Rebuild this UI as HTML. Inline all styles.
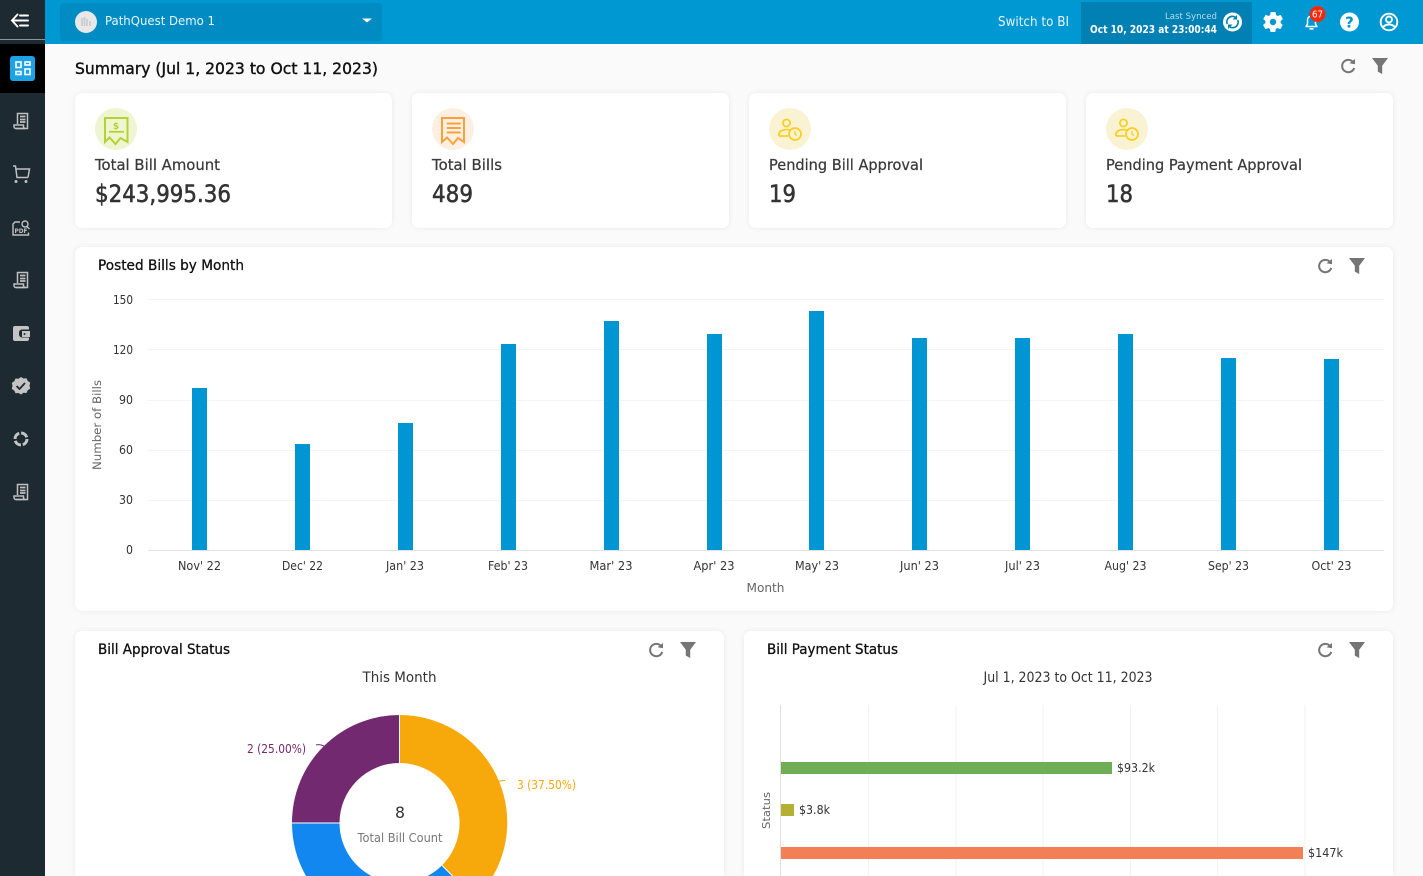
<!DOCTYPE html>
<html><head><meta charset="utf-8"><title>Summary</title>
<style>
html,body{margin:0;padding:0;width:1423px;height:876px;overflow:hidden;background:#fafafa}
#w{position:relative;width:1423px;height:876px;overflow:hidden;background:#fafafa}
.c{position:absolute;background:#fff;border-radius:7px;box-shadow:0 0 6px rgba(0,0,0,.07)}
svg{position:absolute;left:0;top:0}
text{font-family:"DejaVu Sans","Liberation Sans",sans-serif}
</style></head><body>
<div id="w">
<div class="c" style="left:75px;top:93px;width:317px;height:135px"></div>
<div class="c" style="left:412px;top:93px;width:317px;height:135px"></div>
<div class="c" style="left:749px;top:93px;width:317px;height:135px"></div>
<div class="c" style="left:1086px;top:93px;width:307px;height:135px"></div>
<div class="c" style="left:75px;top:247px;width:1318px;height:364px"></div>
<div class="c" style="left:75px;top:631px;width:649px;height:245px;border-radius:7px 7px 0 0"></div>
<div class="c" style="left:744px;top:631px;width:649px;height:245px;border-radius:7px 7px 0 0"></div>
<svg width="1423" height="876" viewBox="0 0 1423 876" xmlns="http://www.w3.org/2000/svg">
<defs>
<g id="rf" fill="none" stroke="#757575" stroke-width="2"><path d="M13.2 4.2A6.2 6.2 0 1 0 14.2 10"/><path d="M9.5 5.2L15 6.2V1z" fill="#757575" stroke="none"/></g>
<path id="fl" fill="#757575" d="M0 0H16L10.2 7.8V16L5.8 13.6V7.8z"/>
<g id="rc" fill="none" stroke="#c0c0c0"><path d="M4.500 12V1.500H14.500V16.500H3" stroke-width="1.500"/><path d="M1 13H10.500V14.500a2 2 0 0 0 2 2H3a2 2 0 0 1-2-2z" stroke-width="1.500"/><path d="M7 4.500H12.500M7 7.500H12.500M7 10H12.500" stroke-width="1.700"/></g>
<g id="us"><circle cx="21" cy="21" r="21" fill="#f9f3d4"/><g fill="none" stroke="#fbcf22" stroke-width="1.800"><circle cx="17.500" cy="15" r="3.600"/><path d="M10 28v-1.500c0-3.500 4-5 7.500-5 1.500 0 2.500.2 3.500.7M10 28h9"/><circle cx="26" cy="26" r="6"/><path d="M26 23v3.200l2 1.300" stroke-width="1.300"/></g></g>
</defs>

<!-- top bar -->
<rect x="45" y="0" width="1378" height="44" fill="#0098d2"/>
<rect x="60" y="3" width="322" height="38" rx="4" fill="#008cc2"/>
<circle cx="86" cy="22" r="11" fill="#e8e8e8"/>
<path d="M82 26v-8M84.500 26v-9M87 26v-7M90 26v-5" stroke="#c9c9c9" stroke-width="1.600" fill="none"/>
<text x="105" y="25" font-size="12" fill="#e8f6fc" textLength="110" lengthAdjust="spacingAndGlyphs">PathQuest Demo 1</text>
<path d="M362 18.500h10l-5 4z" fill="#fff"/>
<text x="998" y="26" font-size="13" fill="#e8f6fc" textLength="71" lengthAdjust="spacingAndGlyphs">Switch to BI</text>
<rect x="1081" y="2" width="171" height="42" fill="#0080b3"/>
<text x="1165" y="19" font-size="9" fill="#b5dcec" textLength="52" lengthAdjust="spacingAndGlyphs">Last Synced</text>
<text x="1090" y="33" font-size="11" font-weight="bold" fill="#fff" textLength="127" lengthAdjust="spacingAndGlyphs">Oct 10, 2023 at 23:00:44</text>
<circle cx="1232.500" cy="22" r="9.500" fill="#fff"/>
<g fill="none" stroke="#0080b3" stroke-width="1.700"><path d="M1227.300 24a5.500 5.500 0 0 1 7.700-7"/><path d="M1237.700 20a5.500 5.500 0 0 1-7.700 7"/></g>
<path d="M1237 15v4.500h-4.500zM1228 29v-4.500h4.500z" fill="#0080b3"/>
<!-- gear -->
<g transform="translate(1273,22)"><path fill="#fff" d="M7.600 1a7.500 7.500 0 0 0 0-2L9.700-2.700a.5.5 0 0 0 .1-.6l-2-3.500a.5.5 0 0 0-.6-.2l-2.500 1a7.500 7.500 0 0 0-1.700-1l-.4-2.600a.5.5 0 0 0-.5-.4h-4a.5.5 0 0 0-.5.4l-.4 2.600a7.500 7.500 0 0 0-1.700 1l-2.500-1a.5.500 0 0 0-.6.2l-2 3.500a.5.500 0 0 0 .1.600L-7.600-1a7.500 7.500 0 0 0 0 2l-2.100 1.700a.5.500 0 0 0-.1.600l2 3.500a.5.500 0 0 0 .6.2l2.500-1a7.500 7.500 0 0 0 1.700 1l.4 2.600a.5.500 0 0 0 .5.400h4a.5.500 0 0 0 .5-.4l.4-2.600a7.500 7.500 0 0 0 1.700-1l2.500 1a.5.500 0 0 0 .6-.2l2-3.500a.5.500 0 0 0-.1-.6zM0 3.200A3.200 3.200 0 1 1 0-3.200 3.200 3.200 0 0 1 0 3.200z"/></g>
<!-- bell -->
<path d="M1306 26.500h11l-1.500-2.300V20a4 4 0 0 0-8 0v4.200z" fill="none" stroke="#fff" stroke-width="1.500" stroke-linejoin="round"/>
<path d="M1309.500 28.800h4" stroke="#fff" stroke-width="1.600"/>
<circle cx="1317.500" cy="14" r="8" fill="#f12a0e"/>
<text x="1317.500" y="17.500" font-size="9.500" fill="#fff" text-anchor="middle" textLength="11" lengthAdjust="spacingAndGlyphs">67</text>
<!-- help -->
<circle cx="1349.500" cy="22" r="9.500" fill="#fff"/>
<text x="1349.500" y="27.500" font-size="15" font-weight="bold" fill="#0098d2" text-anchor="middle">?</text>
<!-- user -->
<g fill="none" stroke="#fff" stroke-width="1.900"><circle cx="1389" cy="22" r="8.300"/><circle cx="1389" cy="19.500" r="3"/><path d="M1383 27.500c1.500-2.500 3.800-3 6-3s4.500.5 6 3"/></g>

<!-- sidebar -->
<rect x="0" y="0" width="45" height="876" fill="#1d2a32"/>
<rect x="0" y="39" width="45" height="1" fill="#8a9398"/>
<rect x="0" y="44" width="45" height="49" fill="#000"/>
<g fill="none" stroke="#fff" stroke-width="1.900" stroke-linecap="round"><path d="M17.500 14.500L12 20.500l5.500 6M12.500 20.500H28M20 15.500h8M20 25.500h8"/></g>
<rect x="10" y="56" width="25" height="25" rx="3" fill="#1ba3e6"/>
<g fill="none" stroke="#fff" stroke-width="1.600"><rect x="16" y="62" width="5" height="5.500"/><rect x="25" y="62" width="5" height="3"/><rect x="16" y="71.500" width="5" height="3"/><rect x="25" y="69" width="5" height="5.500"/></g>
<use href="#rc" transform="translate(13,112)"/>
<g fill="none" stroke="#c0c0c0" stroke-width="1.500"><path d="M13 166h2.500l1.500 11.500h11M16 169h13.500l-1.500 8.500"/></g><circle cx="16" cy="181.500" r="1.500" fill="#c0c0c0"/><circle cx="26" cy="181.500" r="1.500" fill="#c0c0c0"/>
<g fill="none" stroke="#c0c0c0" stroke-width="1.400"><path d="M20 222h-5l-2 2v11h15.500v-2.500"/><circle cx="25" cy="224" r="3"/><path d="M27 226.500l2.500 2.500"/></g>
<text x="14.500" y="233" font-size="6" font-weight="bold" fill="#c0c0c0" textLength="13" lengthAdjust="spacingAndGlyphs">PDF</text>
<use href="#rc" transform="translate(13,271)"/>
<path fill="#c4c4c4" d="M13 328a2 2 0 0 1 2-2h12a2 2 0 0 1 2 1.500v2h-7a3 3 0 0 0-3 3v2a3 3 0 0 0 3 3h7v1.500a2 2 0 0 1-2 2H15a2 2 0 0 1-2-2z"/><path fill="#c4c4c4" d="M22 331h8v6h-8z"/><circle cx="24.500" cy="334" r="1" fill="#1d2a32"/>
<path fill="#c4c4c4" d="M21 377l2.500 1.500 3-.3 1.200 2.700 2.500 1.700-.7 3 .7 3-2.500 1.700-1.200 2.700-3-.3L21 394.500l-2.500-1.500-3 .3-1.200-2.700-2.500-1.700.7-3-.7-3 2.500-1.700 1.200-2.700 3 .3z"/>
<path d="M16.500 386l3 3 5.500-6" fill="none" stroke="#1d2a32" stroke-width="1.800"/>
<circle cx="21" cy="439" r="6" fill="none" stroke="#c4c4c4" stroke-width="3" stroke-dasharray="7.500 1.900"/>
<use href="#rc" transform="translate(13,483)"/>

<!-- heading -->
<text x="75" y="74" font-size="16" fill="#111" stroke="#111" stroke-width=".4" textLength="303" lengthAdjust="spacingAndGlyphs">Summary (Jul 1, 2023 to Oct 11, 2023)</text>
<use href="#rf" x="1340" y="58"/><use href="#fl" x="1372" y="58"/>

<!-- card 1 -->
<circle cx="116" cy="129" r="21" fill="#eef5d0"/>
<g fill="none" stroke="#b3d334" stroke-width="2"><path d="M105 118h22.500v24l-7-4-5 6-6-6.500-4.500 4.500z"/><path d="M109 131.800h15" stroke-width="1.800"/></g>
<text x="116" y="129" font-size="9" font-weight="bold" fill="#b3d334" text-anchor="middle">$</text>
<text x="95" y="170" font-size="15" fill="#3a3a3a" stroke="#3a3a3a" stroke-width=".25" textLength="125" lengthAdjust="spacingAndGlyphs">Total Bill Amount</text>
<text x="95" y="202" font-size="24" fill="#333" stroke="#333" stroke-width=".55" textLength="136" lengthAdjust="spacingAndGlyphs">$243,995.36</text>
<!-- card 2 -->
<circle cx="453" cy="129" r="21" fill="#fdf0e2"/>
<g fill="none" stroke="#fba13c" stroke-width="2"><path d="M442 118h22v24l-6-4-5 6-6-6.500-5 4.500z"/><path d="M446.700 123.500h14M446.700 128h14M446.700 132.500h14"/></g>
<text x="432" y="170" font-size="15" fill="#3a3a3a" stroke="#3a3a3a" stroke-width=".25" textLength="70" lengthAdjust="spacingAndGlyphs">Total Bills</text>
<text x="432" y="202" font-size="24" fill="#333" stroke="#333" stroke-width=".55" textLength="41" lengthAdjust="spacingAndGlyphs">489</text>
<!-- card 3 -->
<use href="#us" x="769" y="108"/>
<text x="769" y="170" font-size="15" fill="#3a3a3a" stroke="#3a3a3a" stroke-width=".25" textLength="154" lengthAdjust="spacingAndGlyphs">Pending Bill Approval</text>
<text x="769" y="202" font-size="24" fill="#333" stroke="#333" stroke-width=".55" textLength="27" lengthAdjust="spacingAndGlyphs">19</text>
<!-- card 4 -->
<use href="#us" x="1106" y="108"/>
<text x="1106" y="170" font-size="15" fill="#3a3a3a" stroke="#3a3a3a" stroke-width=".25" textLength="196" lengthAdjust="spacingAndGlyphs">Pending Payment Approval</text>
<text x="1106" y="202" font-size="24" fill="#333" stroke="#333" stroke-width=".55" textLength="27" lengthAdjust="spacingAndGlyphs">18</text>

<!-- bar chart -->
<text x="98" y="270" font-size="14" fill="#111" stroke="#111" stroke-width=".3" textLength="146" lengthAdjust="spacingAndGlyphs">Posted Bills by Month</text>
<use href="#rf" x="1317" y="258"/><use href="#fl" x="1349" y="258"/>
<g stroke="#f4f4f4" stroke-width="1"><path d="M148 299.500H1384M148 349.500H1384M148 400.500H1384M148 450.500H1384M148 500.500H1384"/></g>
<path d="M148 550.500H1384" stroke="#e2e2e2"/>
<g font-size="12" fill="#333" text-anchor="end">
<text x="133" y="304" textLength="20" lengthAdjust="spacingAndGlyphs">150</text>
<text x="133" y="354" textLength="20" lengthAdjust="spacingAndGlyphs">120</text>
<text x="133" y="404" textLength="14" lengthAdjust="spacingAndGlyphs">90</text>
<text x="133" y="454" textLength="14" lengthAdjust="spacingAndGlyphs">60</text>
<text x="133" y="504" textLength="14" lengthAdjust="spacingAndGlyphs">30</text>
<text x="133" y="554" textLength="7" lengthAdjust="spacingAndGlyphs">0</text>
</g>
<text transform="translate(101,470) rotate(-90)" font-size="11.500" fill="#666" textLength="90" lengthAdjust="spacingAndGlyphs">Number of Bills</text>
<g fill="#0096d3">
<rect x="192" y="388" width="15" height="162"/>
<rect x="295" y="444" width="15" height="106"/>
<rect x="398" y="423" width="15" height="127"/>
<rect x="501" y="344" width="15" height="206"/>
<rect x="604" y="321" width="15" height="229"/>
<rect x="707" y="334" width="15" height="216"/>
<rect x="809" y="311" width="15" height="239"/>
<rect x="912" y="338" width="15" height="212"/>
<rect x="1015" y="338" width="15" height="212"/>
<rect x="1118" y="334" width="15" height="216"/>
<rect x="1221" y="358" width="15" height="192"/>
<rect x="1324" y="359" width="15" height="191"/>
</g>
<g font-size="12" fill="#333" text-anchor="middle">
<text x="199.500" y="570" textLength="43" lengthAdjust="spacingAndGlyphs">Nov' 22</text>
<text x="302.500" y="570" textLength="41" lengthAdjust="spacingAndGlyphs">Dec' 22</text>
<text x="405" y="570" textLength="38" lengthAdjust="spacingAndGlyphs">Jan' 23</text>
<text x="508" y="570" textLength="40" lengthAdjust="spacingAndGlyphs">Feb' 23</text>
<text x="611" y="570" textLength="43" lengthAdjust="spacingAndGlyphs">Mar' 23</text>
<text x="714" y="570" textLength="41" lengthAdjust="spacingAndGlyphs">Apr' 23</text>
<text x="817" y="570" textLength="44" lengthAdjust="spacingAndGlyphs">May' 23</text>
<text x="919.500" y="570" textLength="39" lengthAdjust="spacingAndGlyphs">Jun' 23</text>
<text x="1022.500" y="570" textLength="35" lengthAdjust="spacingAndGlyphs">Jul' 23</text>
<text x="1125.500" y="570" textLength="42" lengthAdjust="spacingAndGlyphs">Aug' 23</text>
<text x="1228.500" y="570" textLength="41" lengthAdjust="spacingAndGlyphs">Sep' 23</text>
<text x="1331.500" y="570" textLength="40" lengthAdjust="spacingAndGlyphs">Oct' 23</text>
</g>
<text x="765.500" y="592" font-size="12" fill="#666" text-anchor="middle" textLength="38" lengthAdjust="spacingAndGlyphs">Month</text>

<!-- approval -->
<text x="98" y="654" font-size="14" fill="#111" stroke="#111" stroke-width=".3" textLength="132" lengthAdjust="spacingAndGlyphs">Bill Approval Status</text>
<use href="#rf" x="648" y="642"/><use href="#fl" x="680" y="642"/>
<text x="399.500" y="682" font-size="14" fill="#333" text-anchor="middle" textLength="74" lengthAdjust="spacingAndGlyphs">This Month</text>
<path fill="#1287ef" d="M306 876A107.500 107.500 0 0 1 292 823H339.500A60 60 0 0 0 371.400 876z"/>
<path fill="#1287ef" d="M442 865.400A60 60 0 0 1 427.600 876H452.600z"/>
<path fill="#f7a90c" d="M399.500 715A107.500 107.500 0 0 1 493 876H452.600L442 865.400A60 60 0 0 0 399.500 763z"/>
<path fill="#73296f" d="M292 823A107.500 107.500 0 0 1 399.500 715V763A60 60 0 0 0 339.500 823z"/>
<path d="M399.500 715V763M292 823H339.500M442 865.400L452.600 876" stroke="#fff" stroke-width="1" fill="none"/>
<path d="M316 745c3-1 5-.5 8 1" fill="none" stroke="#73296f"/>
<path d="M497 782c2-1 5-1.500 8-1.500" fill="none" stroke="#f7a90c"/>
<text x="247" y="753" font-size="12" fill="#73296f" textLength="59" lengthAdjust="spacingAndGlyphs">2 (25.00%)</text>
<text x="517" y="789" font-size="12" fill="#f7a90c" textLength="59" lengthAdjust="spacingAndGlyphs">3 (37.50%)</text>
<text x="400" y="818" font-size="16" fill="#333" text-anchor="middle" textLength="10" lengthAdjust="spacingAndGlyphs">8</text>
<text x="400" y="842" font-size="12" fill="#777" text-anchor="middle" textLength="85" lengthAdjust="spacingAndGlyphs">Total Bill Count</text>

<!-- payment -->
<text x="767" y="654" font-size="14" fill="#111" stroke="#111" stroke-width=".3" textLength="131" lengthAdjust="spacingAndGlyphs">Bill Payment Status</text>
<use href="#rf" x="1317" y="642"/><use href="#fl" x="1349" y="642"/>
<text x="1068" y="682" font-size="14" fill="#333" text-anchor="middle" textLength="169" lengthAdjust="spacingAndGlyphs">Jul 1, 2023 to Oct 11, 2023</text>
<path d="M868.500 705V876M956 705V876M1043 705V876M1130.500 705V876M1217.500 705V876M1305 705V876" stroke="#f2f2f2"/>
<path d="M780.500 705V876" stroke="#dedede"/>
<rect x="781" y="762" width="331" height="12" fill="#6fae57"/>
<rect x="781" y="804" width="13" height="12" fill="#b3b034"/>
<rect x="781" y="847" width="522" height="12" fill="#f27f56"/>
<g font-size="12" fill="#333">
<text x="1117" y="772" textLength="38" lengthAdjust="spacingAndGlyphs">$93.2k</text>
<text x="799" y="814" textLength="31" lengthAdjust="spacingAndGlyphs">$3.8k</text>
<text x="1308" y="857" textLength="35" lengthAdjust="spacingAndGlyphs">$147k</text>
</g>
<text transform="translate(770,829) rotate(-90)" font-size="11" fill="#666" textLength="37" lengthAdjust="spacingAndGlyphs">Status</text>
</svg>
</div>
</body></html>
